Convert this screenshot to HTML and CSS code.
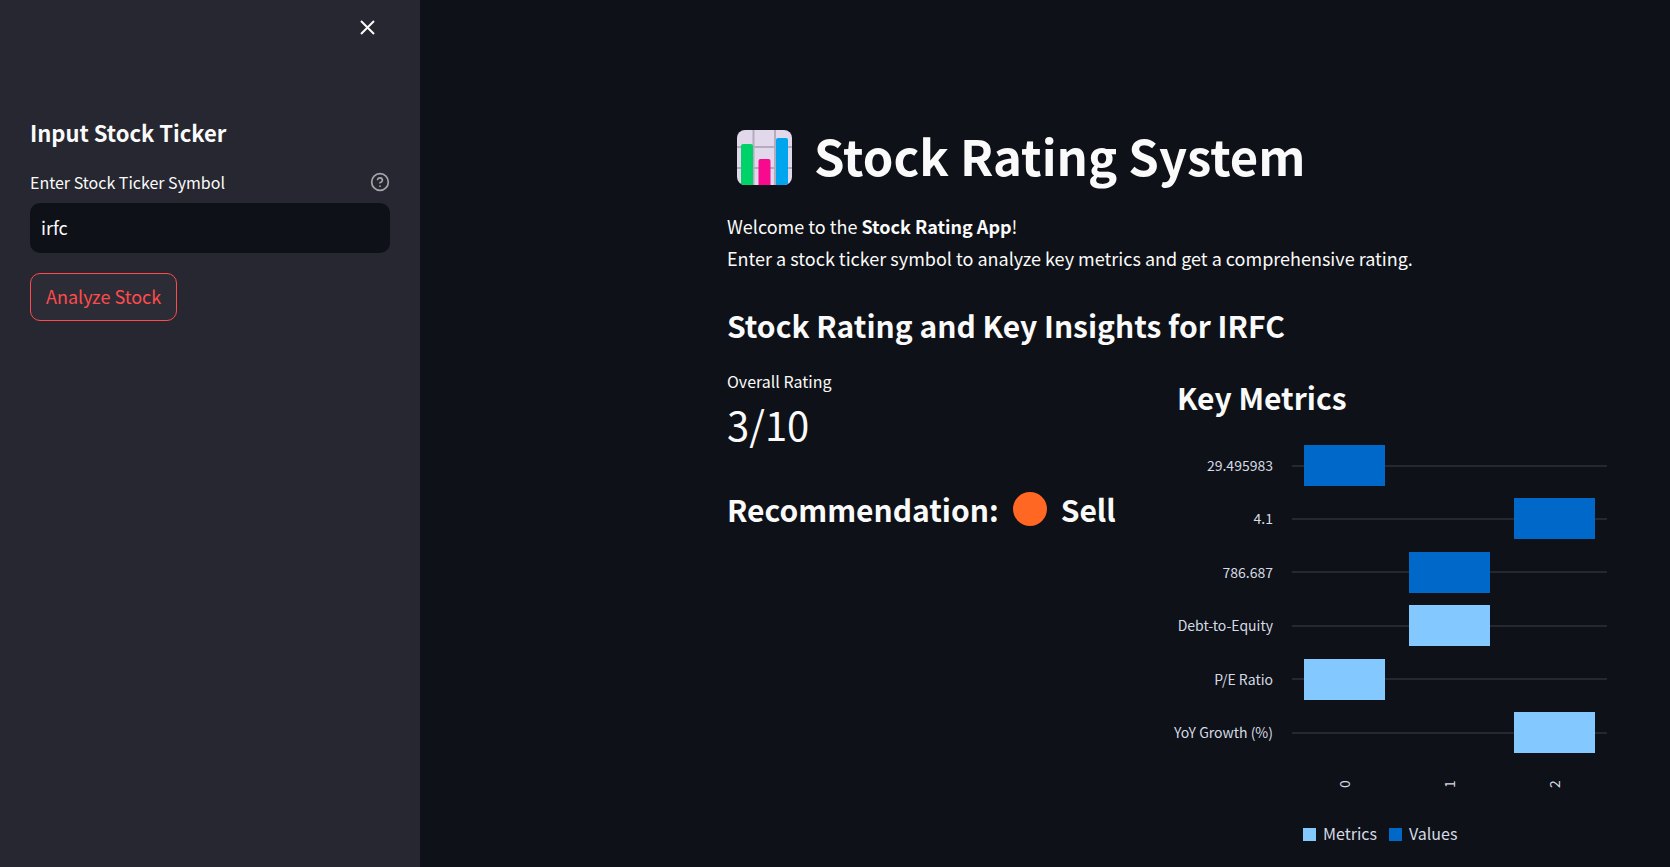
FILE: index.html
```html
<!DOCTYPE html>
<html lang="en">
<head>
<meta charset="utf-8">
<title>Stock Rating System</title>
<link rel="stylesheet" href="styles.css">
</head>
<body>
<div class="app">
  <aside class="sidebar">
    <div class="sidebar-top">
      <button class="close" type="button" aria-label="Close sidebar">
        <svg width="25" height="25" viewBox="0 0 25 25"><path d="M6 6 19 19M19 6 6 19" fill="none" stroke="#fafafa" stroke-width="2"/></svg>
      </button>
    </div>
    <form class="ticker-form">
      <h2 class="sidebar-title">Input Stock Ticker</h2>
      <div class="label-row">
        <label for="ticker">Enter Stock Ticker Symbol</label>
        <svg class="help" width="20" height="20" viewBox="0 0 24 24" fill="none" stroke="#a6a6ab" stroke-width="2" stroke-linecap="round" stroke-linejoin="round"><circle cx="12" cy="12" r="10"/><path d="M9.1 9a3 3 0 0 1 5.8 1c0 2-3 3-3 3M12 17h.01"/></svg>
      </div>
      <input class="ticker-input" id="ticker" type="text" value="irfc">
      <button class="analyze" type="button">Analyze Stock</button>
    </form>
  </aside>
  <main class="main">
    <div class="content">
      <h1 class="title">
        <svg class="chart-emoji" width="55" height="55" viewBox="0 0 55 55">
          <rect width="55" height="55" rx="8" fill="#e1d8ec"/>
          <path d="M16.500 0V55M38 0V55M0 17H55M0 38H55" stroke="#b4acbc" stroke-width="2"/>
          <path d="M4 55V16a2 2 0 0 1 2-2h8a2 2 0 0 1 2 2v39H8q-2 0-4-1z" fill="#00d26a"/>
          <path d="M21.500 55V31a2 2 0 0 1 2-2h8a2 2 0 0 1 2 2v24z" fill="#f70a8d"/>
          <path d="M39 55V10a2 2 0 0 1 2-2h8a2 2 0 0 1 2 2v43.500q-2 1.500-4 1.500z" fill="#00a6ed"/>
        </svg>
        <span>Stock Rating System</span>
      </h1>
      <p class="intro">Welcome to the <strong>Stock Rating App</strong>!<br>Enter a stock ticker symbol to analyze key metrics and get a comprehensive rating.</p>
      <h2 class="heading">Stock Rating and Key Insights for IRFC</h2>
      <div class="columns">
        <section class="rating">
          <div class="metric-label">Overall Rating</div>
          <div class="metric-value">3/10</div>
          <h3 class="heading recommendation">
            <span>Recommendation:</span>
            <svg width="34" height="34" viewBox="0 0 34 34"><circle cx="17" cy="17" r="17" fill="#ff6723"/></svg>
            <span>Sell</span>
          </h3>
        </section>
        <section class="metrics">
          <h3 class="heading">Key Metrics</h3>
          <svg class="chart" viewBox="0 0 430 410" role="img" aria-label="Key metrics by index">
            <g class="grid">
              <path d="M115 26H430M115 79H430M115 132H430M115 186H430M115 239H430M115 293H430"/>
            </g>
            <g class="values">
              <rect x="127" y="5" width="81" height="41"/>
              <rect x="337" y="58" width="81" height="41"/>
              <rect x="232" y="112" width="81" height="41"/>
            </g>
            <g class="names">
              <rect x="232" y="165" width="81" height="41"/>
              <rect x="127" y="219" width="81" height="41"/>
              <rect x="337" y="272" width="81" height="41"/>
            </g>
            <g class="y-labels">
              <text x="96" y="31">29.495983</text>
              <text x="96" y="84">4.1</text>
              <text x="96" y="138">786.687</text>
              <text x="96" y="191">Debt-to-Equity</text>
              <text x="96" y="245">P/E Ratio</text>
              <text x="96" y="298">YoY Growth (%)</text>
            </g>
            <g class="x-labels">
              <text transform="translate(173 344) rotate(-90)">0</text>
              <text transform="translate(278 344) rotate(-90)">1</text>
              <text transform="translate(383 344) rotate(-90)">2</text>
            </g>
            <g class="legend">
              <rect class="names" x="126" y="388" width="13" height="13"/>
              <text x="146" y="400">Metrics</text>
              <rect class="values" x="212" y="388" width="13" height="13"/>
              <text x="232" y="400">Values</text>
            </g>
          </svg>
        </section>
      </div>
    </div>
  </main>
</div>
</body>
</html>
```
FILE: styles.css
```css
* { box-sizing: border-box; }
body {
  margin: 0;
  background: #0e1117;
  color: #fafafa;
  font-family: "Noto Sans CJK SC", "Noto Sans", sans-serif;
  font-size: 18px;
}
h1, h2, h3, p { margin: 0; }
button, input { font: inherit; }
.app { display: flex; min-height: 100vh; overflow: hidden; }
.sidebar { flex: 0 0 420px; padding: 0 30px; background: #262730; }
.sidebar-top { display: flex; justify-content: flex-end; padding: 15px 10px 0; }
.close { display: flex; padding: 0; border: 0; background: none; cursor: pointer; }
.ticker-form { padding-top: 74px; }
.sidebar-title { font-size: 22px; line-height: 36px; font-weight: 600; }
.label-row {
  display: flex;
  justify-content: space-between;
  align-items: center;
  margin-top: 17px;
  font-size: 16px;
  line-height: 30px;
}
.ticker-input {
  display: block;
  width: 100%;
  height: 50px;
  margin-top: 6px;
  padding: 0 11px 2px;
  border: 0;
  border-radius: 10px;
  background: #0e1117;
  color: #fafafa;
}
.analyze {
  height: 48px;
  margin-top: 20px;
  padding: 0 15px 2px;
  border: 1px solid #ff4b4b;
  border-radius: 10px;
  background: #2b2c36;
  color: #ff4b4b;
}
.main { flex: 1; padding: 122px 63px 0; }
.content { max-width: 880px; margin-left: auto; }
.title {
  display: flex;
  align-items: center;
  gap: 22px;
  padding-left: 10px;
  font-size: 49px;
  line-height: 66px;
  font-weight: 700;
}
.chart-emoji { margin-top: 4px; }
.intro { margin-top: 22px; line-height: 32px; }
.heading { font-size: 30px; line-height: 42px; font-weight: 600; }
.intro + .heading { margin-top: 30px; }
.columns { display: grid; grid-template-columns: 1fr 1fr; gap: 20px; margin-top: 22px; }
.metric-label { font-size: 16px; line-height: 26px; }
.metric-value { font-size: 40px; line-height: 60px; }
.recommendation { display: flex; align-items: center; gap: 14px; margin-top: 34px; white-space: nowrap; }
.metrics { padding-top: 8px; }
.chart { display: block; width: 100%; margin-top: 22px; overflow: visible; font-size: 14px; fill: #d5dae5; }
.grid { stroke: #262730; stroke-width: 2; }
.values { fill: #0068c9; }
.names { fill: #83c9ff; }
.y-labels { text-anchor: end; }
.x-labels { text-anchor: middle; }
.legend { font-size: 16px; }
```
